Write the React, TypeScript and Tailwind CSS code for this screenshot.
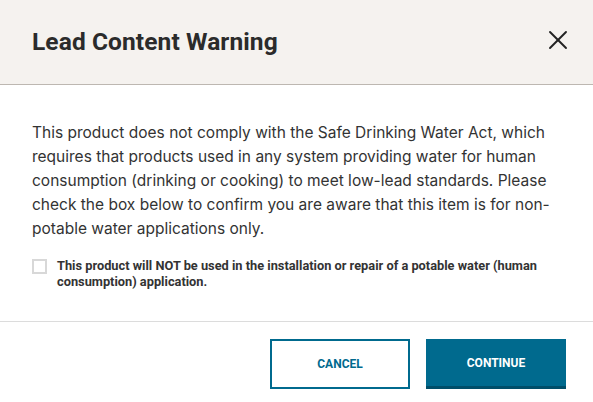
import { X } from 'lucide-react'

export default function App() {
  return (
    <div className="w-[593px] h-[402px] bg-white flex flex-col" style={{ fontFamily: 'Inter, "Liberation Sans", sans-serif' }}>
      {/* Header */}
      <div className="h-[85px] shrink-0 bg-[#f5f2ef] border-b border-[#bdb7b1] flex items-center justify-between pl-8 pr-[19px]">
        <h2 className="text-[24.5px] font-bold text-[#2b2b2b] font-['Roboto',sans-serif] tracking-[0.1px]">Lead Content Warning</h2>
        <button className="text-[#222] -mt-[4px]">
          <X className="w-[32px] h-[32px]" strokeWidth={1.4} />
        </button>
      </div>

      {/* Body */}
      <div className="px-8 pt-[36px] h-[237px] shrink-0 border-b border-[#dcdcdc]">
        <p className="text-[15.5px] leading-6 text-[#333]">
          This product does not comply with the Safe Drinking Water Act, which requires that products used in any system providing water for human consumption (drinking or cooking) to meet low-lead standards. Please check the box below to confirm you are aware that this item is for non-potable water applications only.
        </p>
        <label className="flex items-start gap-[10px] mt-[17px]">
          <span className="mt-[1px] w-[15px] h-[15px] shrink-0 border-2 border-[#d8d8d8] bg-white" />
          <span className="text-[12.8px] leading-4 font-bold text-[#333] font-['Roboto',sans-serif] pr-6">
            This product will NOT be used in the installation or repair of a potable water (human consumption) application.
          </span>
        </label>
      </div>

      {/* Footer */}
      <div className="flex justify-end gap-4 pr-[27px] pt-[17px] font-['Roboto',sans-serif]">
        <button className="w-[140px] h-[50px] border-2 border-[#006a8e] text-[#006a8e] text-[12px] font-bold uppercase">
          Cancel
        </button>
        <button className="w-[140px] h-[50px] bg-[#006a8e] border-b-[3px] border-[#004e69] text-white text-[12px] font-bold uppercase">
          Continue
        </button>
      </div>
    </div>
  )
}
